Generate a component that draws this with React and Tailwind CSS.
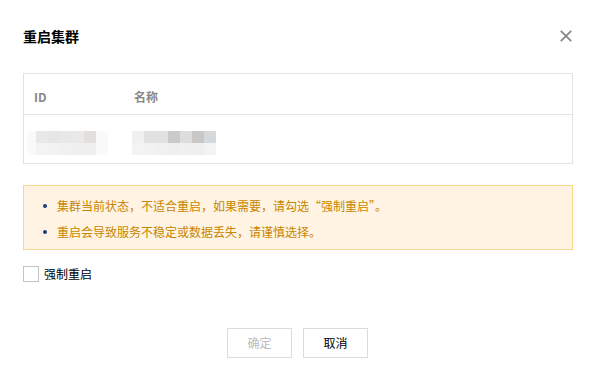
// Blurred placeholder cells in the table body (mosaic of 12px tiles).
const ID_TILES = [
  ["bg-[#e8e8e8]", "bg-[#e6e6e6]", "bg-[#e8e8e8]", "bg-[#e9e9e9]", "bg-[#e3dfdc]"],
  ["bg-[#f3f3f3]", "bg-[#f2f2f2]", "bg-[#f1f1f1]", "bg-[#efefef]", "bg-[#efefef]"],
];
const NAME_TILES = [
  ["bg-[#f0f0ef]", "bg-[#e2e0e0]", "bg-[#e0e2df]", "bg-[#cbcaca]", "bg-[#dcdddd]", "bg-[#cac8c6]", "bg-[#d6d9dc]"],
  ["bg-[#f3f3f3]", "bg-[#f2f2f2]", "bg-[#f1f1f1]", "bg-[#efefef]", "bg-[#f0f0f0]", "bg-[#efefef]", "bg-[#f2f3f4]"],
];

function Mosaic({ tiles }) {
  return (
    <div className="flex flex-col">
      {tiles.map((row, i) => (
        <div key={i} className="flex">
          {row.map((c, j) => (
            <div key={j} className={`w-[12px] h-[12px] ${c}`} />
          ))}
        </div>
      ))}
    </div>
  );
}

export default function App() {
  return (
    <div
      className="w-[594px] h-[381px] bg-white pl-[23px] pr-[21px] text-[#333] overflow-hidden"
      style={{ fontFamily: '"Noto Sans CJK SC", "Noto Sans", sans-serif' }}
    >
      <div className="mt-[26px] h-[20px] flex items-center justify-between">
        <h2 className="text-[14px] leading-[20px] font-bold text-black">重启集群</h2>
        <button type="button" aria-label="关闭" className="text-[#888] mr-[1px]">
          <svg width="12" height="12" viewBox="0 0 12 12" fill="none" stroke="currentColor" strokeWidth="1.8">
            <path d="M0.8 0.8L11.2 11.2M11.2 0.8L0.8 11.2" />
          </svg>
        </button>
      </div>

      <div className="mt-[27px] border border-[#e3e3e3]">
        <div className="flex h-[41px] border-b border-[#e3e3e3] pt-[14px] text-[12px] leading-[18px] font-bold text-[#888]">
          <div className="w-[100px] pl-[10px]">ID</div>
          <div className="pl-[10px]">名称</div>
        </div>
        <div className="flex h-[48px] pt-[16px]">
          <div className="w-[100px] pl-[3px]">
            <div className="rounded-[6px] bg-[#f9f9f9] pl-[9px] w-[81px]">
              <Mosaic tiles={ID_TILES} />
            </div>
          </div>
          <div className="pl-[8px]">
            <div className="rounded-[6px] bg-[#f9f9f9]">
              <Mosaic tiles={NAME_TILES} />
            </div>
          </div>
        </div>
      </div>

      <div className="mt-[21px] border border-[#fcd68f] bg-[#fff4e3] pt-[10px] pb-[7px] pl-[19px] text-[12px] leading-[20px] text-[#c98400]">
        <ul className="flex flex-col gap-[6px]">
          <li className="flex items-center">
            <span className="w-[4px] h-[4px] rounded-full bg-[#1d3d7c] mr-[10px]" />
            集群当前状态，不适合重启，如果需要，请勾选“强制重启”。
          </li>
          <li className="flex items-center">
            <span className="w-[4px] h-[4px] rounded-full bg-[#1d3d7c] mr-[10px]" />
            重启会导致服务不稳定或数据丢失，请谨慎选择。
          </li>
        </ul>
      </div>

      <label className="mt-[16px] flex items-center h-[16px] cursor-pointer">
        <span className="w-[16px] h-[16px] border border-[#c4c4c4] bg-white" />
        <span className="ml-[5px] text-[12px] leading-[16px] text-black">强制重启</span>
      </label>

      <div className="mt-[46px] flex justify-center gap-[11px] pr-[1px]">
        <button
          type="button"
          disabled
          className="w-[65px] h-[30px] border border-[#dcdcdc] bg-white text-[12px] text-[#bbb]"
        >
          确定
        </button>
        <button
          type="button"
          className="w-[65px] h-[30px] border border-[#dcdcdc] bg-white text-[12px] text-black"
        >
          取消
        </button>
      </div>
    </div>
  );
}
